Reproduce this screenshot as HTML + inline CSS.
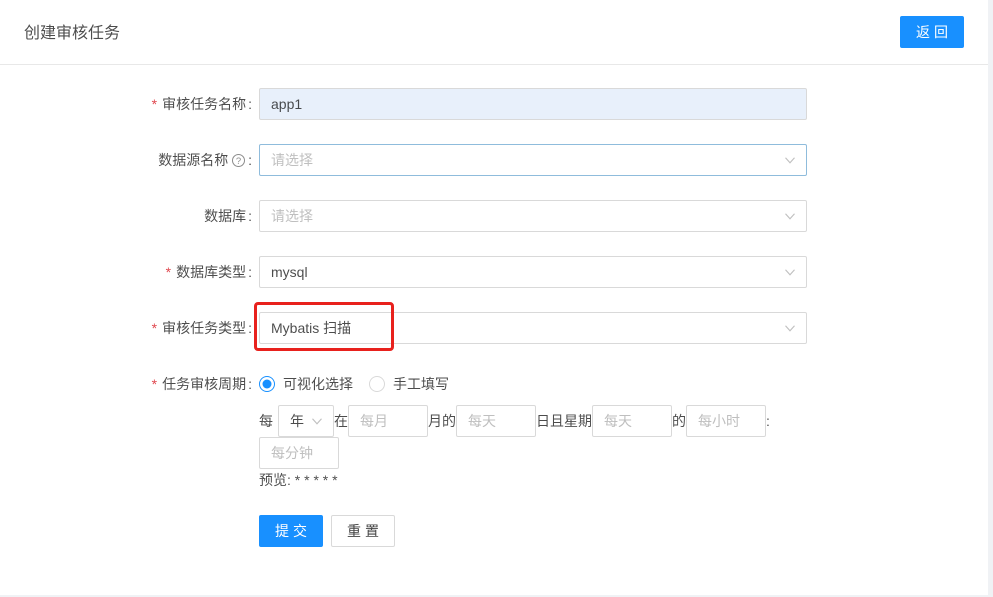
<!DOCTYPE html>
<html lang="zh">
<head>
<meta charset="utf-8">
<style>
html,body{margin:0;padding:0;width:993px;height:597px;overflow:hidden;background:#f0f2f5;}
body{position:relative;font-family:"Liberation Sans","Noto Sans CJK SC",sans-serif;font-size:14px;color:rgba(0,0,0,.65);}
.a{position:absolute;white-space:nowrap;}
.card{position:absolute;left:0;top:0;width:988px;height:595px;background:#fff;}
.hr{position:absolute;left:0;top:64px;width:988px;height:1px;background:#e8e8e8;}
.lab{position:absolute;right:741px;height:32px;line-height:32px;white-space:nowrap;color:rgba(0,0,0,.7);}
.lab i{font-style:normal;margin-left:2px;}
.req{color:#e0484f;font-family:"Liberation Sans",sans-serif;margin-right:5px;}
.box{position:absolute;box-sizing:border-box;border:1px solid #d9d9d9;border-radius:2px;background:#fff;height:32px;line-height:30px;padding-left:11px;white-space:nowrap;}
.ph{color:#bfbfbf;}
.val{color:rgba(0,0,0,.7);}
.chev{position:absolute;width:10px;height:7px;}
.t{position:absolute;height:32px;line-height:32px;white-space:nowrap;color:rgba(0,0,0,.7);}
.btn{position:absolute;box-sizing:border-box;height:32px;line-height:30px;text-align:center;border-radius:2px;letter-spacing:4px;text-indent:4px;}
.pri{background:#1890ff;border:1px solid #1890ff;color:#fff;}
.def{background:#fff;border:1px solid #d9d9d9;color:rgba(0,0,0,.75);}
</style>
</head>
<body>
<div class="card"></div>
<div class="hr"></div>
<div class="a" style="left:24px;top:23px;font-size:16px;line-height:22px;color:rgba(0,0,0,.7);">创建审核任务</div>
<div class="btn pri" style="left:900px;top:16px;width:64px;">返回</div>

<div class="lab" style="top:88px;"><span class="req">*</span>审核任务名称<i>:</i></div>
<div class="box val" style="left:259px;top:88px;width:548px;background:#e8f0fb;">app1</div>

<div class="lab" style="top:144px;">数据源名称 <svg width="13" height="13" viewBox="0 0 13 13" style="vertical-align:-2px"><circle cx="6.5" cy="6.5" r="6" fill="none" stroke="#8c8c8c"/><text x="6.5" y="10" font-size="9.5" text-anchor="middle" fill="#8c8c8c" font-family="Liberation Sans">?</text></svg><i style="margin-left:3px">:</i></div>
<div class="box ph" style="left:259px;top:144px;width:548px;border-color:#8fbcdc;">请选择</div>
<svg class="chev" style="left:785px;top:157px" viewBox="0 0 10 7"><path d="M.5 .8L5 5.8L9.5 .8" fill="none" stroke="#bfbfbf" stroke-width="1.1"/></svg>

<div class="lab" style="top:200px;">数据库<i>:</i></div>
<div class="box ph" style="left:259px;top:200px;width:548px;">请选择</div>
<svg class="chev" style="left:785px;top:213px" viewBox="0 0 10 7"><path d="M.5 .8L5 5.8L9.5 .8" fill="none" stroke="#bfbfbf" stroke-width="1.1"/></svg>

<div class="lab" style="top:256px;"><span class="req">*</span>数据库类型<i>:</i></div>
<div class="box val" style="left:259px;top:256px;width:548px;">mysql</div>
<svg class="chev" style="left:785px;top:269px" viewBox="0 0 10 7"><path d="M.5 .8L5 5.8L9.5 .8" fill="none" stroke="#bfbfbf" stroke-width="1.1"/></svg>

<div class="lab" style="top:312px;"><span class="req">*</span>审核任务类型<i>:</i></div>
<div class="box val" style="left:259px;top:312px;width:548px;">Mybatis 扫描</div>
<svg class="chev" style="left:785px;top:325px" viewBox="0 0 10 7"><path d="M.5 .8L5 5.8L9.5 .8" fill="none" stroke="#bfbfbf" stroke-width="1.1"/></svg>

<div class="a" style="left:254px;top:302px;width:140px;height:49px;box-sizing:border-box;border:3px solid #e8211d;border-radius:4px;"></div>

<div class="lab" style="top:368px;"><span class="req">*</span>任务审核周期<i>:</i></div>
<svg class="a" style="left:259px;top:376px" width="16" height="16" viewBox="0 0 16 16"><circle cx="8" cy="8" r="7.5" fill="#fff" stroke="#1890ff"/><circle cx="8" cy="8" r="4.5" fill="#1890ff"/></svg>
<div class="t" style="left:283px;top:368px;">可视化选择</div>
<svg class="a" style="left:369px;top:376px" width="16" height="16" viewBox="0 0 16 16"><circle cx="8" cy="8" r="7.5" fill="#fff" stroke="#d9d9d9"/></svg>
<div class="t" style="left:393px;top:368px;">手工填写</div>

<div class="t" style="left:259px;top:405px;">每</div>
<div class="box val" style="left:278px;top:405px;width:56px;">年</div>
<svg class="chev" style="left:312px;top:418px;" viewBox="0 0 10 7"><path d="M.5 .8L5 5.8L9.5 .8" fill="none" stroke="#bfbfbf" stroke-width="1.1"/></svg>
<div class="t" style="left:334px;top:405px;">在</div>
<div class="box ph" style="left:348px;top:405px;width:80px;">每月</div>
<div class="t" style="left:428px;top:405px;">月的</div>
<div class="box ph" style="left:456px;top:405px;width:80px;">每天</div>
<div class="t" style="left:536px;top:405px;">日且星期</div>
<div class="box ph" style="left:592px;top:405px;width:80px;">每天</div>
<div class="t" style="left:672px;top:405px;">的</div>
<div class="box ph" style="left:686px;top:405px;width:80px;">每小时</div>
<div class="t" style="left:766px;top:405px;">:</div>
<div class="box ph" style="left:259px;top:437px;width:80px;">每分钟</div>
<div class="a" style="left:259px;top:470px;line-height:20px;color:rgba(0,0,0,.7);">预览: * * * * *</div>

<div class="btn pri" style="left:259px;top:515px;width:64px;">提交</div>
<div class="btn def" style="left:331px;top:515px;width:64px;">重置</div>
</body>
</html>
